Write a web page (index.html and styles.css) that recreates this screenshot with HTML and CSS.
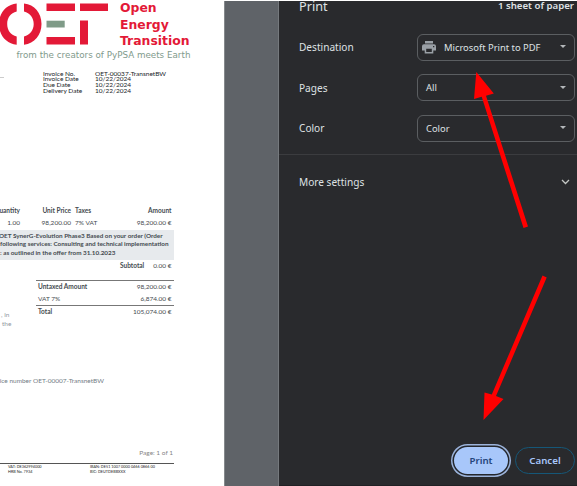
FILE: index.html
```html
<!DOCTYPE html>
<html lang="en">
<head>
<meta charset="utf-8">
<title>Print</title>
<link rel="stylesheet" href="styles.css">
</head>
<body>
<main class="dialog">
  <section class="preview">
    <article class="sheet">
      <header class="brand">
        <svg class="logo" width="109" height="48" viewBox="0 0 109 48">
          <g fill="#e31937">
            <path d="M16.7 3.500V11.500C10.500 13 7.200 18 7.200 24S10.500 35 16.700 36.500V44.700C6 43.500-1 35 -1 24S6 4.500 16.700 3.500Z"/>
            <path d="M24 3.500C34.500 4.500 41.500 13 41.500 24S34.500 43.500 24 44.700V36.500C30 35 33.700 30 33.700 24S30 13 24 11.500Z"/>
            <path d="M46.500 3.500H75V11H46.500ZM46.500 37H75V44.500H46.500ZM80 3.500H108V11H80ZM80 20.500H88V44.500H80Z"/>
          </g>
          <path d="M46.500 20.700H64.700V27.500H46.500Z" fill="#7f9b88"/>
        </svg>
        <div class="brand-name"><span>Open</span><span>Energy</span><span>Transition</span></div>
      </header>
      <p class="tagline">from the creators of PyPSA meets Earth</p>
      <div class="meta">
        <span class="address-rule"></span>
        <dl>
          <dt>Invoice No.</dt><dd>OET-00037-TransnetBW</dd>
          <dt>Invoice Date</dt><dd>10/22/2024</dd>
          <dt>Due Date</dt><dd>10/22/2024</dd>
          <dt>Delivery Date</dt><dd>10/22/2024</dd>
        </dl>
      </div>
      <div class="row heading"><span class="qty">uantity</span><span class="price">Unit Price</span><span class="tax">Taxes</span><span class="amount">Amount</span></div>
      <div class="row item"><span class="qty">1.00</span><span class="price">98,200.00</span><span class="tax">7% VAT</span><span class="amount">98,200.00 €</span></div>
      <div class="note"><p class="n1">OET SynerG-Evolution Phase3 Based on your order (Order</p><p class="n2">following services: Consulting and technical implementation</p><p class="n3">: as outlined in the offer from 31.10.2023</p></div>
      <div class="subtotal"><b>Subtotal</b><span>0.00 €</span></div>
      <div class="summary">
        <div class="terms"><p>, in</p><p>the</p></div>
        <div class="totals">
          <div><b>Untaxed Amount</b><span>98,200.00 €</span></div>
          <div><span>VAT 7%</span><span>6,874.00 €</span></div>
          <div class="total"><b>Total</b><span>105,074.00 €</span></div>
        </div>
      </div>
      <p class="reference">oice number OET-00007-TransnetBW</p>
      <p class="page-number">Page: 1 of 1</p>
      <footer class="legal">
        <div>VAT: DE362994000<br>HRB No. 7934</div>
        <div><span class="iban">IBAN: DE51 1007 0000 0466 0866 00</span><br>BIC: DEUTDEBBXXX</div>
      </footer>
    </article>
  </section>
  <aside class="panel">
    <header class="title"><h1>Print</h1><span>1 sheet of paper</span></header>
    <div class="setting"><label>Destination</label>
      <div class="select with-icon">
        <svg class="printer" width="14" height="13" viewBox="0 0 14 13"><path fill="#9aa0a6" fill-rule="evenodd" d="M3 0H11V2.500H3ZM2 3.300H12A2 2 0 0 1 14 5.300V9.500H11.300V12.500H2.700V9.500H0V5.300A2 2 0 0 1 2 3.300ZM4.200 7.800V11H9.800V7.800ZM11 5V6.300H12.300V5Z"/></svg>
        <span class="value">Microsoft Print to PDF</span><i class="caret"></i>
      </div>
    </div>
    <div class="setting"><label>Pages</label><div class="select"><span class="value">All</span><i class="caret"></i></div></div>
    <div class="setting"><label>Color</label><div class="select"><span class="value">Color</span><i class="caret"></i></div></div>
    <div class="more"><span>More settings</span>
      <svg width="9" height="6" viewBox="0 0 9 6"><path d="M1 1L4.500 4.500L8 1" fill="none" stroke="#c4c7c5" stroke-width="1.300"/></svg>
    </div>
    <div class="actions"><button class="primary">Print</button><button class="secondary">Cancel</button></div>
  </aside>
  <svg class="arrows" width="577" height="486" viewBox="0 0 577 486">
    <g fill="#ff0000" stroke="none">
      <path d="M476.300 72L493.800 93.500L486 95.700L528 226.500L523.500 228L481.700 96.800L474 99Z"/>
      <path d="M542.500 275.500L546.700 277.500L496 396L503.500 399L483.500 420L484.500 392.500L491.800 394.500Z"/>
    </g>
  </svg>
</main>
</body>
</html>
```
FILE: styles.css
```css
* { box-sizing: border-box; }
body { margin: 0; overflow: hidden; background: #fff; }
p, h1, dl, dd { margin: 0; }
.dialog { position: relative; display: flex; width: 577px; height: 486px; }
.preview { width: 279px; height: 485px; margin-top: 1px; background: #5f6368; border-right: 1px solid #75797d; }
.sheet {
  width: 225px; height: 485px; overflow: hidden; background: #fff;
  border-right: 1px solid #85898c;
  font: 6.500px/9px Lato, sans-serif; color: #454b50; white-space: nowrap;
}
.brand { display: flex; height: 47px; }
.logo { display: block; flex: none; margin-top: -1px; }
.brand-name { display: flex; flex-direction: column; margin-left: 11px; font: bold 12.400px/16.500px "DejaVu Sans", sans-serif; color: #e31937; margin-top: -1px; }
.tagline { height: 15px; padding-left: 16.500px; font: 8.750px/15px "DejaVu Sans", sans-serif; color: #819a8c; }
.meta { display: flex; height: 137px; padding-top: 6.500px; }
.address-rule { width: 4px; height: 1px; margin: 7px 39px 0 0; background: #ccc; }
dl { display: grid; grid-template-columns: 52px auto; grid-auto-rows: 5.900px; align-content: start; font-size: 6.500px; line-height: 7px; color: #202428; }
.row { display: flex; height: 12px; line-height: 12px; }
.heading { margin-top: 5px; font-weight: bold; }
.qty { display: flex; justify-content: flex-end; width: 20px; }
.price { width: 51px; text-align: right; }
.tax { width: 50px; margin-left: 4px; }
.amount { width: 46.500px; text-align: right; }
.note { width: 174px; height: 30px; margin-top: 1px; padding-top: 1.500px; background: #e7eaed; font-weight: bold; font-size: 6.330px; line-height: 8.800px; }
.item { height: 12px; }
.n1 { margin-left: -1px; }
.subtotal { display: flex; justify-content: flex-end; width: 171.500px; margin-top: 0; gap: 9px; line-height: 12px; }
.summary { display: flex; height: 94px; margin-top: 7.500px; }
.terms { width: 36px; padding: 30px 0 0 1px; color: #9097a0; }
.terms p + p { margin-left: 1px; }
.totals { width: 138px; margin-top: 0; }
.totals div { display: flex; justify-content: space-between; height: 12.500px; padding: 0 2.500px 0 2px; line-height: 12px; }
.totals div:first-child { border-top: 1px solid #777; height: 13px; }
.totals .total { border-top: 1px solid #777; }
.reference { width: 104px; display: flex; justify-content: flex-end; color: #737c86; margin-top: 2.500px; }
.page-number { width: 173px; margin-top: 63px; text-align: right; color: #858585; }
.legal { display: flex; width: 174px; height: 20px; margin-top: 6px; border-top: 1px solid #555; padding: 0 0 0 8px; font-size: 3.800px; line-height: 5px; color: #222; }
.legal div { width: 82px; }

.panel { width: 298px; height: 485px; margin-top: 1px; background: #292a2d; color: #dfe1e4; font: 10.100px/16px "Noto Sans", sans-serif; border-bottom: 1px solid #202124; overflow: hidden; }
.title { display: flex; justify-content: space-between; height: 26px; padding: 0 3px 0 20px; }
.title h1 { font-size: 12.700px; font-weight: 400; line-height: 16px; margin-top: -3px; }
.title span { font-size: 9.650px; font-weight: 600; line-height: 16px; margin-top: -3px; }
.setting { display: flex; align-items: center; height: 40.500px; padding-left: 20px; }
.setting label { width: 118px; }
.select { display: flex; align-items: center; width: 158px; height: 27px; padding: 0 8px; border: 1px solid #5b5e61; border-radius: 6px; font-size: 9.400px; }
.value { margin-top: 1px; }
.caret { margin-left: auto; border: 3px solid transparent; border-top-color: #b4b7ba; border-bottom: 0; margin-top: -1px; }
.with-icon { padding-left: 4px; gap: 8px; }
.more { display: flex; align-items: center; justify-content: space-between; height: 56px; margin-top: 5px; padding: 0 7px 0 20px; border-top: 1px solid #3b3c3f; }
.actions { display: flex; align-items: center; justify-content: flex-end; gap: 7px; margin-top: 237.500px; padding-right: 2px; }
button { height: 27px; padding: 0; border-radius: 14px; font: 600 9.700px/16px "Noto Sans", sans-serif; }
.primary { width: 54px; border: 0; background: #a8c7fa; color: #24457b; box-shadow: 0 0 0 1.500px #24272d, 0 0 0 3px #9cb4dc; }
.secondary { width: 60px; border: 1px solid #155778; background: transparent; color: #a8c7fa; }
.arrows { position: absolute; inset: 0; pointer-events: none; }
```
